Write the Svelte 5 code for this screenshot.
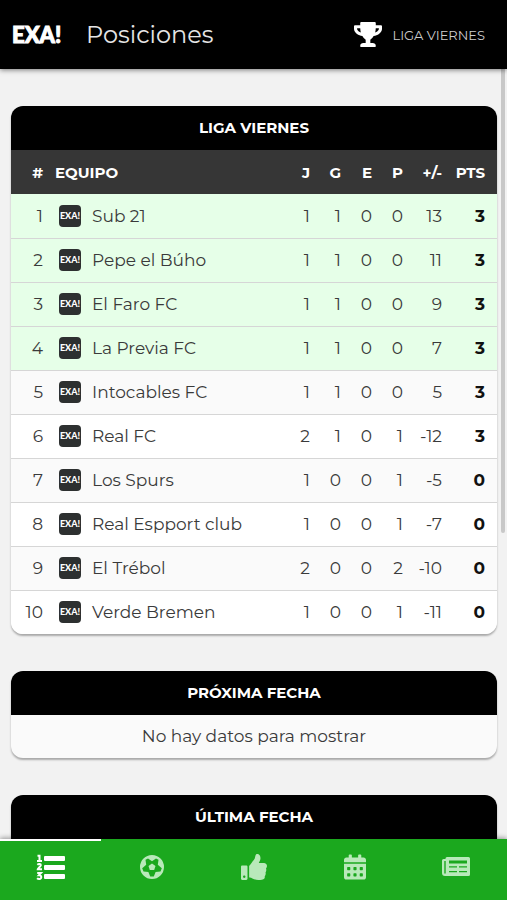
<script lang="ts">
    interface Team {
        name: string
        stats: number[]
        points: number
    }

    const league = 'LIGA VIERNES'
    const columns = ['J', 'G', 'E', 'P', '+/-']

    const teams: Team[] = [
        { name: 'Sub 21', stats: [1, 1, 0, 0, 13], points: 3 },
        { name: 'Pepe el Búho', stats: [1, 1, 0, 0, 11], points: 3 },
        { name: 'El Faro FC', stats: [1, 1, 0, 0, 9], points: 3 },
        { name: 'La Previa FC', stats: [1, 1, 0, 0, 7], points: 3 },
        { name: 'Intocables FC', stats: [1, 1, 0, 0, 5], points: 3 },
        { name: 'Real FC', stats: [2, 1, 0, 1, -12], points: 3 },
        { name: 'Los Spurs', stats: [1, 0, 0, 1, -5], points: 0 },
        { name: 'Real Espport club', stats: [1, 0, 0, 1, -7], points: 0 },
        { name: 'El Trébol', stats: [2, 0, 0, 2, -10], points: 0 },
        { name: 'Verde Bremen', stats: [1, 0, 0, 1, -11], points: 0 },
    ]

    // Teams in the top four go through to the next round
    const qualified = 4

    const tabs = ['Posiciones', 'Partidos', 'Fair play', 'Calendario', 'Noticias']
    let active = $state(0)
</script>

<div class="app">
    <header class="topbar">
        <a class="brand" href="#inicio">EXA!</a>
        <h1>Posiciones</h1>
        <button class="league" type="button">
            <svg width="28" height="25" viewBox="0 0 576 512" aria-hidden="true">
                <path
                    fill="currentColor"
                    d="M552 64H448V24c0-13.300-10.700-24-24-24H152c-13.300 0-24 10.700-24 24v40H24C10.700 64 0 74.700 0 88v56c0 35.700 22.500 72.400 61.900 100.700 31.500 22.700 69.800 37.100 110 41.700C203.300 338.500 240 360 240 360v72h-48c-35.300 0-64 20.700-64 56v12c0 6.600 5.400 12 12 12h296c6.600 0 12-5.400 12-12v-12c0-35.300-28.700-56-64-56h-48v-72s36.700-21.500 68.100-73.600c40.300-4.600 78.600-19 110-41.700 39.300-28.300 61.900-65 61.900-100.700V88c0-13.300-10.700-24-24-24zM99.300 192.800C74.900 175.200 64 155.600 64 144v-16h64.200c1 32.600 5.800 61.200 12.800 86.200-15.100-5.200-29.200-12.400-41.700-21.400zM512 144c0 16.100-17.700 36.100-35.300 48.800-12.500 9-26.700 16.200-41.800 21.400 7-25 11.800-53.600 12.800-86.200H512v16z"
                />
            </svg>
            <span>{league}</span>
        </button>
    </header>

    <main>
        <section class="card">
            <h2>{league}</h2>
            <table>
                <colgroup>
                    <col class="col-rank" />
                    <col class="col-crest" />
                    <col />
                    {#each columns as column}
                        <col class={column === '+/-' ? 'col-diff' : 'col-stat'} />
                    {/each}
                    <col class="col-points" />
                </colgroup>
                <thead>
                    <tr>
                        <th>#</th>
                        <th class="team" colspan="2">EQUIPO</th>
                        {#each columns as column}
                            <th>{column}</th>
                        {/each}
                        <th class="points">PTS</th>
                    </tr>
                </thead>
                <tbody>
                    {#each teams as team, i}
                        <tr class:qualified={i < qualified}>
                            <td>{i + 1}</td>
                            <td class="crest"><span class="badge">EXA!</span></td>
                            <td class="name">{team.name}</td>
                            {#each team.stats as stat}
                                <td>{stat}</td>
                            {/each}
                            <td class="points">{team.points}</td>
                        </tr>
                    {/each}
                </tbody>
            </table>
        </section>

        <section class="card">
            <h2>PRÓXIMA FECHA</h2>
            <p>No hay datos para mostrar</p>
        </section>

        <section class="card">
            <h2>ÚLTIMA FECHA</h2>
            <div class="results"></div>
        </section>

        <div class="scrollbar"></div>
    </main>

    <nav>
        {#each tabs as tab, i}
            <button
                type="button"
                class:active={active === i}
                aria-label={tab}
                onclick={() => (active = i)}
            >
                {#if i === 0}
                    <svg width="30" height="26" viewBox="0 0 30 26" fill="currentColor" aria-hidden="true">
                        <rect x="8" y="2" width="21" height="5" rx="1" />
                        <rect x="8" y="11" width="21" height="5" rx="1" />
                        <rect x="8" y="20" width="21" height="5" rx="1" />
                        <g fill="none" stroke="currentColor" stroke-width="2">
                            <path d="M1.500 1.800H3.500V7M1 7H6" />
                            <path d="M1.300 10.700C3 9.400 5 10 4.800 11.400C4.700 12.500 2 14 1.800 15.200H6" />
                            <path d="M1.200 19H5L3 21.200C6 21 6 25 3.300 25C2.300 25 1.500 24.700 1 24.300" />
                        </g>
                    </svg>
                {:else if i === 1}
                    <svg width="24" height="24" viewBox="0 0 24 24" aria-hidden="true">
                        <path
                            fill="currentColor"
                            fill-rule="evenodd"
                            d="M12 0A12 12 0 1 1 12 24A12 12 0 1 1 12 0ZM5.500 4.800L8 3.500L12 6.300L16 3.500L18.500 4.800L17.800 9.700L21.800 13.300L20.500 16.400L15.600 16.900L13.800 21.500H10.200L8.400 16.900L3.500 16.400L2.200 13.300L6.200 9.700ZM12 8.500L15.500 11L14.200 15H9.800L8.500 11Z"
                        />
                    </svg>
                {:else if i === 2}
                    <svg width="26" height="26" viewBox="0 0 512 512" aria-hidden="true">
                        <path
                            fill="currentColor"
                            d="M104 224H24c-13.300 0-24 10.700-24 24v240c0 13.300 10.700 24 24 24h80c13.300 0 24-10.700 24-24V248c0-13.300-10.700-24-24-24zM64 472c-13.300 0-24-10.700-24-24s10.700-24 24-24 24 10.700 24 24-10.700 24-24 24zM384 81.500c0 42.400-26 66.200-33.300 94.500h101.700c33.400 0 59.400 27.700 59.600 58.100.1 17.900-7.500 37.200-19.400 49.200l-.1.100c9.800 23.300 8.200 56-9.300 79.500 8.700 25.900-.1 57.700-16.400 74.800 4.300 17.600 2.200 32.600-6.100 44.600C440.200 511.600 389.600 512 346.800 512h-2.800c-48.300 0-87.800-17.600-119.600-31.700-16-7.100-36.800-15.900-52.700-16.200-6.500-.1-11.800-5.500-11.800-12V238.300c0-3.200 1.300-6.300 3.600-8.500 39.600-39.100 56.600-80.600 89.100-113.100 14.800-14.800 20.200-37.200 25.400-58.900C282.500 39.300 291.800 0 312 0c24 0 72 8 72 81.500z"
                        />
                    </svg>
                {:else if i === 3}
                    <svg width="22" height="26" viewBox="0 0 448 512" aria-hidden="true">
                        <path
                            fill="currentColor"
                            fill-rule="evenodd"
                            d="M0 464c0 26.500 21.500 48 48 48h352c26.500 0 48-21.500 48-48V192H0v272zm320-196c0-6.600 5.400-12 12-12h40c6.600 0 12 5.400 12 12v40c0 6.600-5.400 12-12 12h-40c-6.600 0-12-5.400-12-12v-40zm0 128c0-6.600 5.400-12 12-12h40c6.600 0 12 5.400 12 12v40c0 6.600-5.400 12-12 12h-40c-6.600 0-12-5.400-12-12v-40zM192 268c0-6.600 5.400-12 12-12h40c6.600 0 12 5.400 12 12v40c0 6.600-5.400 12-12 12h-40c-6.600 0-12-5.400-12-12v-40zm0 128c0-6.600 5.400-12 12-12h40c6.600 0 12 5.400 12 12v40c0 6.600-5.400 12-12 12h-40c-6.600 0-12-5.400-12-12v-40zM64 268c0-6.600 5.400-12 12-12h40c6.600 0 12 5.400 12 12v40c0 6.600-5.400 12-12 12H76c-6.600 0-12-5.400-12-12v-40zm0 128c0-6.600 5.400-12 12-12h40c6.600 0 12 5.400 12 12v40c0 6.600-5.400 12-12 12H76c-6.600 0-12-5.400-12-12v-40zM400 64h-48V16c0-8.800-7.200-16-16-16h-32c-8.800 0-16 7.200-16 16v48H160V16c0-8.800-7.200-16-16-16h-32c-8.800 0-16 7.200-16 16v48H48C21.500 64 0 85.500 0 112v48h448v-48c0-26.500-21.500-48-48-48z"
                        />
                    </svg>
                {:else}
                    <svg width="28" height="24" viewBox="0 0 28 24" aria-hidden="true">
                        <path
                            fill="currentColor"
                            fill-rule="evenodd"
                            d="M5 2H26.500Q28 2 28 3.500V19.500Q28 21 26.500 21H3Q0 21 0 18V5.500Q0 4 1.500 4H3.500V3.500Q3.500 2 5 2ZM2.300 6V18Q2.300 18.800 3 18.800Q3.700 18.800 3.700 18V6ZM7 5.500V8.500H25V5.500ZM7 11.200V12.500H15V11.200ZM17 11.200V12.500H25V11.200ZM7 16V17.300H15V16ZM17 16V17.300H25V16Z"
                        />
                    </svg>
                {/if}
            </button>
        {/each}
    </nav>
</div>

<style>
    :global(body) {
        margin: 0;
    }

    .app {
        display: flex;
        flex-direction: column;
        height: 100vh;
        background: #f2f2f2;
        color: #3a3a3a;
        font-family: Montserrat, Inter, sans-serif;
        font-size: 17px;
    }

    button {
        border: 0;
        padding: 0;
        background: none;
        font: inherit;
        cursor: pointer;
    }

    svg {
        display: block;
    }

    h1,
    h2,
    p {
        margin: 0;
    }

    .topbar {
        display: flex;
        align-items: center;
        flex: none;
        height: 69px;
        padding: 0 22px 0 12px;
        background: #000;
        color: #e6e6e6;
        box-shadow: 0 1px 5px rgba(0, 0, 0, 0.5);
        z-index: 1;
    }

    .brand {
        width: 50px;
        margin-right: 24px;
        color: #fff;
        font-family: Lato, sans-serif;
        font-size: 22px;
        font-weight: 900;
        line-height: 50px;
        text-decoration: none;
        -webkit-text-stroke: 1px #fff;
    }

    h1 {
        font-size: 24px;
        font-weight: 400;
        line-height: 32px;
    }

    .league {
        display: flex;
        align-items: center;
        gap: 10px;
        margin-left: auto;
        color: #fff;
        font-size: 13px;
    }

    .league span {
        color: #ccc;
    }

    main {
        position: relative;
        flex: 1;
        min-height: 0;
        overflow: hidden;
        padding: 37px 10px 0 11px;
    }

    .scrollbar {
        position: absolute;
        top: 0;
        right: 2px;
        width: 4px;
        height: 464px;
        border-radius: 0 0 2px 2px;
        background: #c8c8c8;
    }

    .card {
        margin-bottom: 37px;
        border-radius: 12px;
        background: #fafafa;
        box-shadow: 0 2px 2px rgba(0, 0, 0, 0.3);
        overflow: hidden;
    }

    h2 {
        background: #000;
        color: #fff;
        font-size: 15px;
        font-weight: 700;
        line-height: 44px;
        text-align: center;
    }

    p {
        line-height: 43px;
        text-align: center;
    }

    .results {
        min-height: 44px;
    }

    table {
        width: 100%;
        border-collapse: collapse;
        table-layout: fixed;
    }

    th,
    td {
        height: 44px;
        padding: 0;
        text-align: right;
        white-space: nowrap;
    }

    th {
        background: #363636;
        color: #fff;
        font-size: 15px;
        font-weight: 700;
    }

    td {
        box-sizing: border-box;
        border-bottom: 1px solid #d6d6d6;
    }

    tbody tr:nth-child(even) {
        background: #fff;
    }

    tbody tr.qualified {
        background: #e6ffe8;
    }

    tbody tr:last-child td {
        border-bottom: 0;
    }

    .col-rank {
        width: 32px;
    }

    .col-crest {
        width: 49px;
    }

    .col-stat {
        width: 31px;
    }

    .col-diff {
        width: 39px;
    }

    .col-points {
        width: 55px;
    }

    .team {
        padding-left: 12px;
        text-align: left;
    }

    .crest {
        padding-left: 16px;
    }

    .name {
        text-align: left;
    }

    .points {
        padding-right: 12px;
    }

    td.points {
        color: #111;
        font-weight: 700;
    }

    .badge {
        display: block;
        width: 22px;
        border-radius: 4px;
        background: #2d3030;
        color: #fff;
        font-family: Lato, sans-serif;
        font-size: 9px;
        font-weight: 900;
        line-height: 22px;
        text-align: center;
    }

    nav {
        display: flex;
        flex: none;
        height: 61px;
        background: #1ba81e;
        box-shadow: 0 -1px 5px rgba(0, 0, 0, 0.4);
        z-index: 1;
    }

    nav button {
        display: flex;
        flex: 1;
        align-items: center;
        justify-content: center;
        border-top: 2px solid transparent;
        padding-bottom: 8px;
        color: #b9e9ba;
    }

    nav button.active {
        border-top-color: #fff;
        color: #fff;
    }
</style>
